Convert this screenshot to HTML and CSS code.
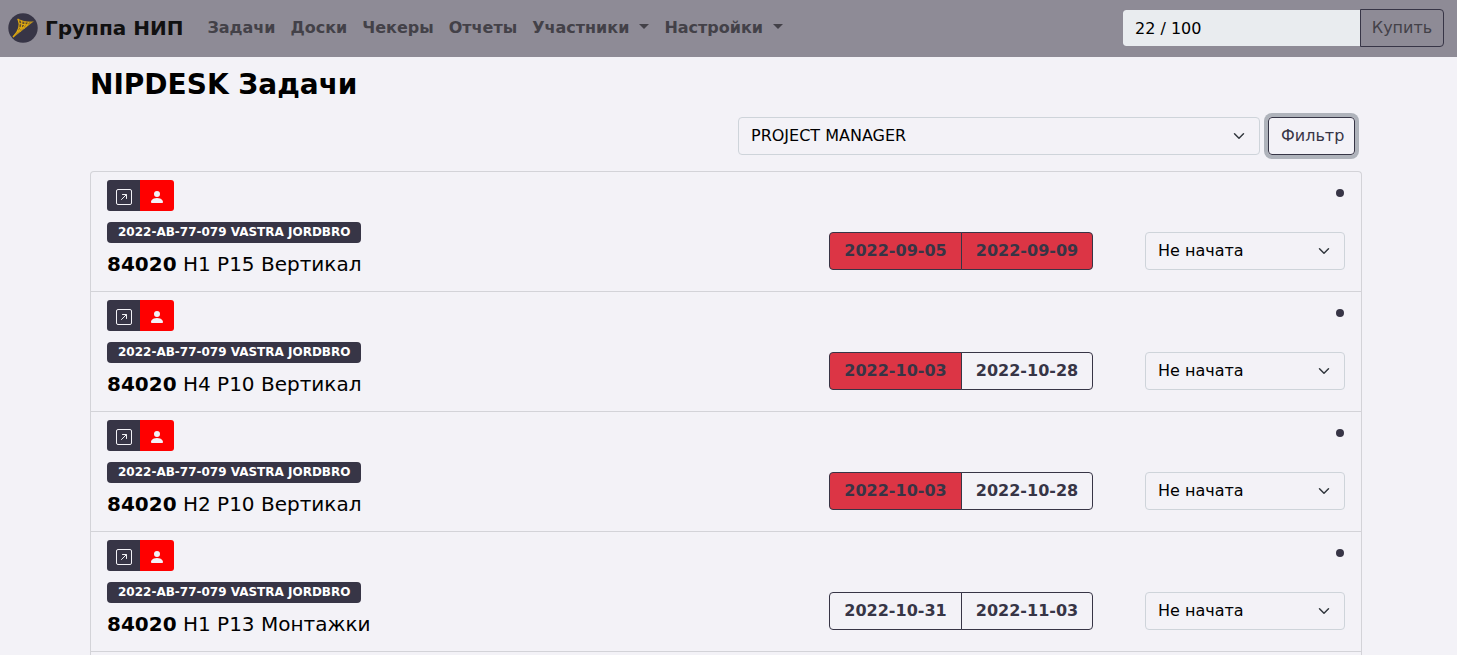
FILE: index.html
```html
<!DOCTYPE html>
<html lang="ru">
<head>
  <meta charset="UTF-8" />
  <meta name="viewport" content="width=device-width, initial-scale=1.0"/>
  <title>NIPDESK Задачи</title>
  <link rel="stylesheet" href="styles.css">
</head>
<body>
  <svg class="sprite" aria-hidden="true">
    <symbol id="icon-open" viewBox="0 0 16 16">
      <rect x="0.5" y="0.5" width="15" height="15" rx="1.5" fill="none" stroke="currentColor"/>
      <path d="M5.5 10.5 10.3 5.7M6.5 5.5h4v4" fill="none" stroke="currentColor" stroke-linecap="round" stroke-linejoin="round"/>
    </symbol>
    <symbol id="icon-person" viewBox="0 0 16 16">
      <path d="M3 14s-1 0-1-1 1-4 6-4 6 3 6 4-1 1-1 1H3zm5-6a3 3 0 1 0 0-6 3 3 0 0 0 0 6z" fill="currentColor"/>
    </symbol>
  </svg>

  <header class="navbar">
    <a class="brand" href="#">
      <svg class="logo" viewBox="0 0 30 30" aria-hidden="true">
        <circle cx="15" cy="15" r="14.7" fill="#373546"/>
        <path d="M10 6c4 2 8 3 14 3L5 24c5-4 8-11 5-18z" fill="#5e4c30"/>
        <path d="M9.500 6c4 2.500 9 3.500 14.500 3L5 24" fill="none" stroke="#b98f20" stroke-width="1.200"/>
        <path d="M10 6c3 7 0 13-5 18M13.500 7.500c1.500 5 0 8-4 12M17 8.500c.5 4-1 6-4 8M20.500 9c0 2-1 3-3 5M11 10.500l9 1.500M11 14.500l6 .5M9 18l4 0" fill="none" stroke="#dfa90f" stroke-width="1.200"/>
      </svg>
      Группа НИП
    </a>
    <nav class="menu">
      <a href="#">Задачи</a>
      <a href="#">Доски</a>
      <a href="#">Чекеры</a>
      <a href="#">Отчеты</a>
      <a class="dropdown" href="#">Участники</a>
      <a class="dropdown" href="#">Настройки</a>
    </nav>
    <form class="limit">
      <input class="limit-input" type="text" value="22 / 100" aria-label="Лимит" readonly>
      <button class="btn limit-btn" type="button">Купить</button>
    </form>
  </header>

  <main class="container">
    <h1>NIPDESK Задачи</h1>

    <form class="filter">
      <select class="select filter-select" aria-label="Роль">
        <option>PROJECT MANAGER</option>
      </select>
      <button class="btn filter-btn" type="button">Фильтр</button>
    </form>

    <ul class="tasks">
      <li class="task">
        <div class="task-top">
          <div class="tools">
            <button class="tool" type="button" aria-label="Открыть"><svg><use href="#icon-open"/></svg></button>
            <button class="tool red" type="button" aria-label="Исполнитель"><svg><use href="#icon-person"/></svg></button>
          </div>
          <span class="dot"></span>
        </div>
        <div class="task-main">
          <div class="info">
            <span class="badge">2022-AB-77-079 VASTRA JORDBRO</span>
            <h2><b>84020</b> H1 P15 Вертикал</h2>
          </div>
          <div class="dates">
            <button class="btn date late" type="button">2022-09-05</button>
            <button class="btn date late" type="button">2022-09-09</button>
          </div>
          <select class="select status" aria-label="Статус">
            <option>Не начата</option>
          </select>
        </div>
      </li>
      <li class="task">
        <div class="task-top">
          <div class="tools">
            <button class="tool" type="button" aria-label="Открыть"><svg><use href="#icon-open"/></svg></button>
            <button class="tool red" type="button" aria-label="Исполнитель"><svg><use href="#icon-person"/></svg></button>
          </div>
          <span class="dot"></span>
        </div>
        <div class="task-main">
          <div class="info">
            <span class="badge">2022-AB-77-079 VASTRA JORDBRO</span>
            <h2><b>84020</b> H4 P10 Вертикал</h2>
          </div>
          <div class="dates">
            <button class="btn date late" type="button">2022-10-03</button>
            <button class="btn date" type="button">2022-10-28</button>
          </div>
          <select class="select status" aria-label="Статус">
            <option>Не начата</option>
          </select>
        </div>
      </li>
      <li class="task">
        <div class="task-top">
          <div class="tools">
            <button class="tool" type="button" aria-label="Открыть"><svg><use href="#icon-open"/></svg></button>
            <button class="tool red" type="button" aria-label="Исполнитель"><svg><use href="#icon-person"/></svg></button>
          </div>
          <span class="dot"></span>
        </div>
        <div class="task-main">
          <div class="info">
            <span class="badge">2022-AB-77-079 VASTRA JORDBRO</span>
            <h2><b>84020</b> H2 P10 Вертикал</h2>
          </div>
          <div class="dates">
            <button class="btn date late" type="button">2022-10-03</button>
            <button class="btn date" type="button">2022-10-28</button>
          </div>
          <select class="select status" aria-label="Статус">
            <option>Не начата</option>
          </select>
        </div>
      </li>
      <li class="task">
        <div class="task-top">
          <div class="tools">
            <button class="tool" type="button" aria-label="Открыть"><svg><use href="#icon-open"/></svg></button>
            <button class="tool red" type="button" aria-label="Исполнитель"><svg><use href="#icon-person"/></svg></button>
          </div>
          <span class="dot"></span>
        </div>
        <div class="task-main">
          <div class="info">
            <span class="badge">2022-AB-77-079 VASTRA JORDBRO</span>
            <h2><b>84020</b> H1 P13 Монтажки</h2>
          </div>
          <div class="dates">
            <button class="btn date" type="button">2022-10-31</button>
            <button class="btn date" type="button">2022-11-03</button>
          </div>
          <select class="select status" aria-label="Статус">
            <option>Не начата</option>
          </select>
        </div>
      </li>
    </ul>
  </main>
</body>
</html>
```

FILE: styles.css
```css
* {
  box-sizing: border-box;
}
body {
  display: flex;
  flex-direction: column;
  min-height: 100vh;
  margin: 0;
  background-color: #f3f2f7;
  color: #000;
  font-family: Verdana, "DejaVu Sans", sans-serif;
  font-size: 16px;
  line-height: 24px;
}
input, select, button {
  font: inherit;
}
.sprite {
  display: none;
}

/* navbar */
.navbar {
  display: flex;
  align-items: center;
  padding: 9px 13px 10px 8px;
  background-color: #8e8b96;
}
.brand {
  display: flex;
  align-items: center;
  gap: 7px;
  margin-right: 17px;
  color: #111;
  font-size: 20px;
  font-weight: bold;
  text-decoration: none;
}
.logo {
  width: 30px;
  height: 30px;
}
.menu {
  display: flex;
  gap: 1px;
}
.menu a {
  padding: 0 7px;
  color: #434148;
  font-weight: bold;
  line-height: 26px;
  text-decoration: none;
}
.dropdown::after {
  content: "";
  display: inline-block;
  margin-left: 10px;
  vertical-align: 4px;
  border: 5px solid transparent;
  border-top-color: currentColor;
  border-bottom: 0;
}
.limit {
  display: flex;
  margin-left: auto;
}
.limit-input {
  width: 238px;
  height: 38px;
  padding: 0 12px;
  border: 1px solid #8e8b96;
  border-right: 0;
  border-radius: 4px 0 0 4px;
  background-color: #e9ecef;
  background-clip: padding-box;
  color: #000;
}

/* controls */
.btn {
  height: 38px;
  padding: 0 12px;
  border: 1px solid #373546;
  border-radius: 4px;
  background-color: transparent;
  color: #373546;
  cursor: pointer;
}
.limit-btn {
  width: 84px;
  padding: 0;
  border-radius: 0 4px 4px 0;
  color: #434148;
}
.select {
  height: 38px;
  padding: 0 36px 0 12px;
  border: 1px solid #ced4da;
  border-radius: 4px;
  appearance: none;
  background: #f3f2f7 url("data:image/svg+xml,%3Csvg xmlns='http://www.w3.org/2000/svg' viewBox='0 0 16 16'%3E%3Cpath fill='none' stroke='%23343a40' stroke-linecap='round' stroke-linejoin='round' stroke-width='2' d='m2 5 6 6 6-6'/%3E%3C/svg%3E") no-repeat right 14px center / 12px 12px;
  color: #000;
}

.container {
  display: flex;
  flex: 1;
  flex-direction: column;
  width: 100%;
  max-width: 1321px;
  margin: 0 auto;
  padding: 8px 27px 0 22px;
}
h1 {
  margin: 0;
  font-size: 28px;
  line-height: 40px;
}
.filter {
  display: flex;
  justify-content: flex-end;
  gap: 8px;
  margin: 12px 7px 16px 0;
}
.filter-select {
  width: 522px;
}
.filter-btn {
  width: 87px;
  box-shadow: 0 0 0 4px #afb3bb;
}

/* task list */
.tasks {
  flex: 1;
  margin: 0;
  padding: 0;
  list-style: none;
  border: 1px solid #d3d3d8;
  border-bottom: 0;
  border-radius: 4px 4px 0 0;
}
.task {
  padding: 8px 16px 11px;
  border-bottom: 1px solid #d3d3d8;
}
.task-top {
  display: flex;
  justify-content: space-between;
}
.tools {
  display: flex;
}
.tool {
  display: flex;
  align-items: center;
  justify-content: center;
  width: 33px;
  height: 31px;
  padding: 3px 0 0;
  border: 0;
  border-radius: 3px 0 0 3px;
  background-color: #373546;
  color: #f3f2f7;
  cursor: pointer;
}
.tool svg {
  width: 16px;
  height: 16px;
}
.tool.red {
  width: 34px;
  border-radius: 0 3px 3px 0;
  background-color: #f00;
}
.dot {
  width: 8px;
  height: 8px;
  margin: 9px 1px 0 0;
  border-radius: 50%;
  background-color: #373546;
}
.task-main {
  display: flex;
  align-items: center;
  margin-top: 11px;
}
.info {
  flex: 1;
}
.badge {
  display: block;
  width: fit-content;
  padding: 0 11px;
  border-radius: 4px;
  background-color: #373546;
  color: #fff;
  font-size: 12px;
  font-weight: bold;
  line-height: 21px;
}
h2 {
  margin: 8px 0 3px;
  font-size: 20px;
  font-weight: normal;
  line-height: 26px;
}
.dates {
  display: flex;
  margin-right: 52px;
}
.date {
  width: 133px;
  font-weight: bold;
}
.date:first-child {
  border-radius: 4px 0 0 4px;
}
.date:last-child {
  width: 132px;
  margin-left: -1px;
  border-radius: 0 4px 4px 0;
}
.late {
  background-color: #dc3545;
}
.status {
  width: 200px;
}
```
